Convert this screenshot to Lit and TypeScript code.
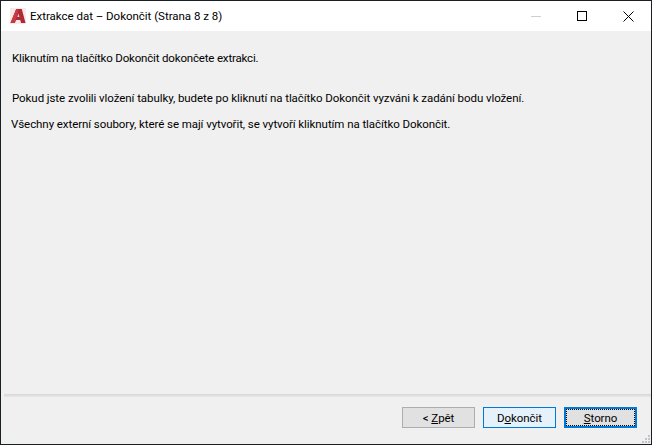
import { LitElement, html, css } from "lit";
import { customElement } from "lit/decorators.js";

@customElement("app-root")
export class AppRoot extends LitElement {
  static styles = css`
    :host { display: block; width: 652px; height: 445px; }
    * { box-sizing: border-box; }
    .win { position: relative; width: 652px; height: 445px; border: 1px solid #1a1f24; background: #f0f0f0; display: flex; flex-direction: column; font-family: Roboto, "Open Sans", sans-serif; font-size: 11.5px; letter-spacing: -0.07px; color: #000; }
    .title { height: 30px; background: #fff; display: flex; align-items: center; padding-left: 9px; flex: none; }
    .logo { width: 16px; height: 16px; flex: none; margin-right: 4px; }
    .ttext { flex: 1; letter-spacing: -0.02px; white-space: nowrap; }
    .ctl { width: 46px; height: 30px; display: flex; align-items: center; justify-content: center; flex: none; }
    .body { flex: 1; padding: 0 10px; position: relative; }
    .body p { margin: 0; white-space: nowrap; line-height: 16px; }
    .p1 { padding: 19px 0 0 1px; letter-spacing: -0.17px; }
    .p2 { padding: 24px 0 0 1px; }
    .p3 { padding: 10px 0 0 0; }
    .sep { flex: none; height: 3px; margin-left: 3px; background: #e0e0e0; border-top: 1px solid #d9d9d9; border-left: 1px solid #dcdcdc; border-bottom: 1px solid #e4e4e4; }
    .foot { flex: none; height: 47px; display: flex; justify-content: flex-end; gap: 8px; padding: 10px 14px 0 0; }
    .btn { width: 73px; height: 21px; border: 1px solid #adadad; background: #e1e1e1; display: flex; align-items: center; justify-content: center; white-space: nowrap; }
    .btn u { text-underline-offset: 1px; }
    .hot { border-color: #0078d7; background: #e5f1fb; }
    .focus { border: 2px solid #0078d7; outline: 1px dotted #000; outline-offset: -3px; }
    .grip { position: absolute; right: 1px; bottom: 1px; width: 9px; height: 9px; }
  `;

  render() {
    return html`
      <div class="win">
        <div class="title">
          <svg class="logo" viewBox="0 0 16 16">
            <rect width="16" height="16" fill="#f9e9e8"></rect>
            <path d="M0.5 15 L6.2 1 H11.8 L15.5 15 H11 L10.3 12 H6 L4.8 15 Z" fill="#b02a35"></path>
            <path d="M7.3 9 L8.4 5.4 L9.5 9 Z" fill="#efc9cb"></path>
            <path d="M6 1.5 L8.5 1 L4.8 15 H0.5 Z" fill="#c73a44"></path>
          </svg>
          <div class="ttext">Extrakce dat – Dokončit (Strana 8 z 8)</div>
          <div class="ctl">
            <svg width="10" height="10" viewBox="0 0 10 10"><path d="M0 5.5H10" stroke="#cfcfcf" fill="none"></path></svg>
          </div>
          <div class="ctl">
            <svg width="10" height="10" viewBox="0 0 10 10"><rect x=".5" y=".5" width="9" height="9" stroke="#000" fill="none"></rect></svg>
          </div>
          <div class="ctl">
            <svg width="11" height="11" viewBox="0 0 11 11"><path d="M.5 .5L10.5 10.5M10.5 .5L.5 10.5" stroke="#000" fill="none"></path></svg>
          </div>
        </div>
        <div class="body">
          <p class="p1">Kliknutím na tlačítko Dokončit dokončete extrakci.</p>
          <p class="p2">Pokud jste zvolili vložení tabulky, budete po kliknutí na tlačítko Dokončit vyzváni k zadání bodu vložení.</p>
          <p class="p3">Všechny externí soubory, které se mají vytvořit, se vytvoří kliknutím na tlačítko Dokončit.</p>
        </div>
        <div class="sep"></div>
        <div class="foot">
          <div class="btn">&lt;&nbsp;<u>Z</u>pět</div>
          <div class="btn hot">D<u>o</u>končit</div>
          <div class="btn focus"><u>S</u>torno</div>
        </div>
        <svg class="grip" viewBox="0 0 9 9" fill="#c4c4c4">
          <rect x="7" y="1" width="2" height="2"></rect>
          <rect x="4" y="4" width="2" height="2"></rect><rect x="7" y="4" width="2" height="2"></rect>
          <rect x="1" y="7" width="2" height="2"></rect><rect x="4" y="7" width="2" height="2"></rect><rect x="7" y="7" width="2" height="2"></rect>
        </svg>
      </div>
    `;
  }
}
